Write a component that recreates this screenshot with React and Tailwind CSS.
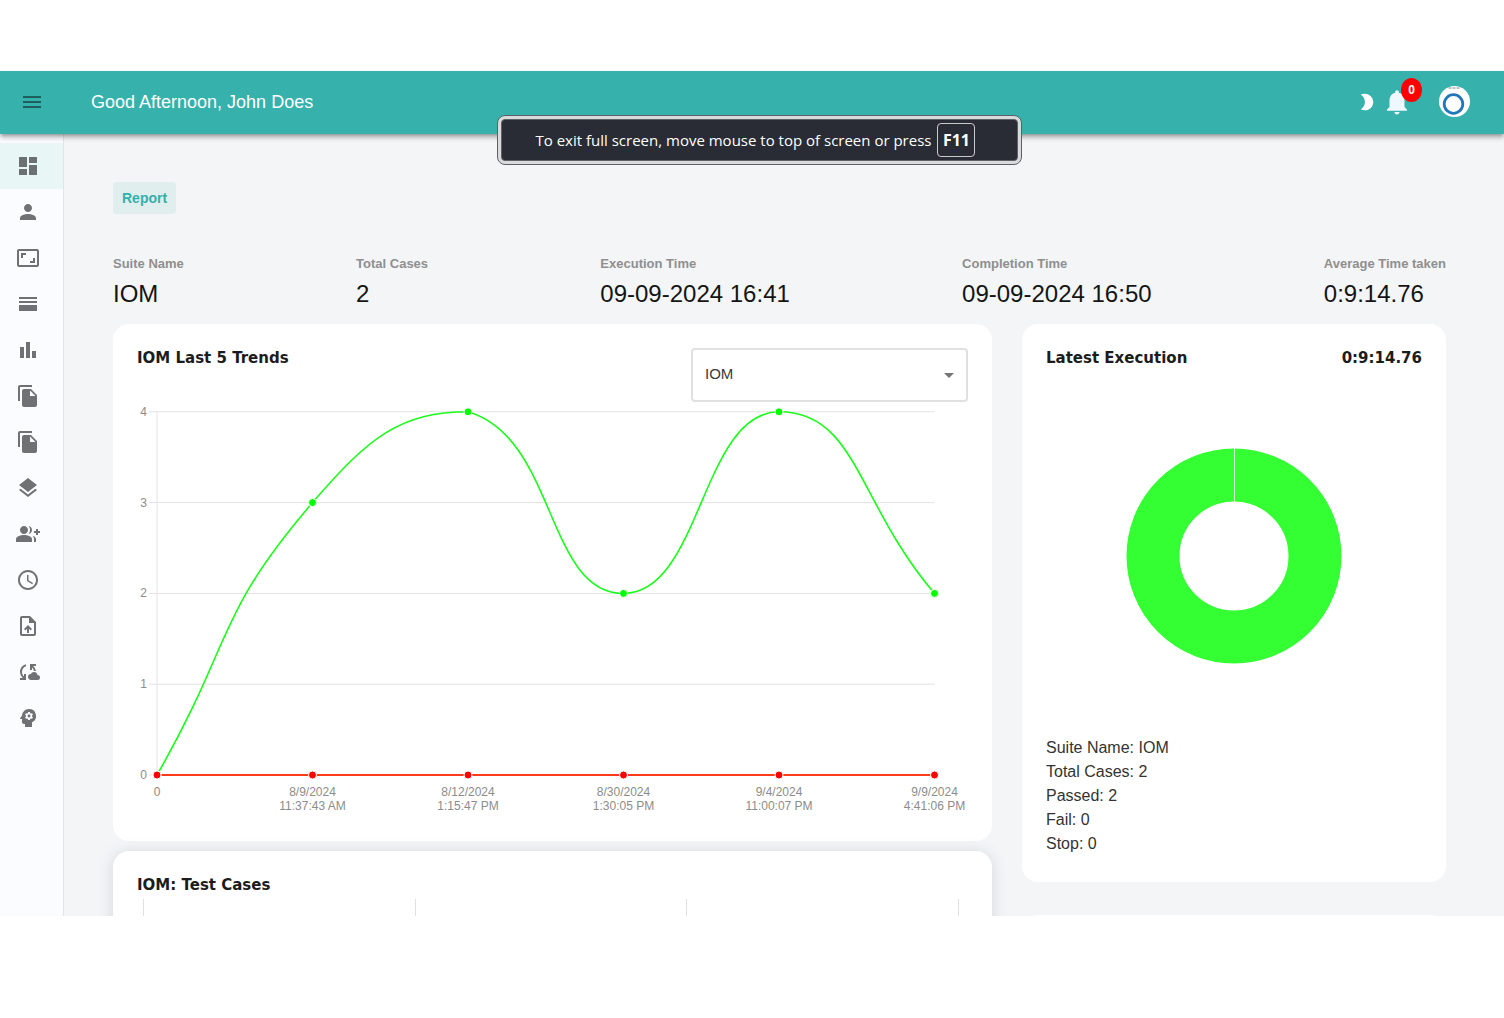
import React from "react";
import {
  MdMenu,
  MdDashboard,
  MdPerson,
  MdAspectRatio,
  MdHorizontalSplit,
  MdBarChart,
  MdFileCopy,
  MdLayers,
  MdGroupAdd,
  MdSchedule,
  MdUploadFile,
  MdCloudSync,
  MdPsychology,
  MdModeNight,
  MdNotifications,
  MdArrowDropDown,
} from "react-icons/md";

const NAV = [
  ["Dashboard", MdDashboard],
  ["Users", MdPerson],
  ["Screens", MdAspectRatio],
  ["Sections", MdHorizontalSplit],
  ["Reports", MdBarChart],
  ["Test cases", MdFileCopy],
  ["Test suites", MdFileCopy],
  ["Layers", MdLayers],
  ["Add group", MdGroupAdd],
  ["Schedule", MdSchedule],
  ["Upload", MdUploadFile],
  ["Cloud sync", MdCloudSync],
  ["Insights", MdPsychology],
];

const STATS = [
  ["Suite Name", "IOM"],
  ["Total Cases", "2"],
  ["Execution Time", "09-09-2024 16:41"],
  ["Completion Time", "09-09-2024 16:50"],
  ["Average Time taken", "0:9:14.76"],
];

const RUNS = [
  { date: "0", time: "", passed: 0 },
  { date: "8/9/2024", time: "11:37:43 AM", passed: 3 },
  { date: "8/12/2024", time: "1:15:47 PM", passed: 4 },
  { date: "8/30/2024", time: "1:30:05 PM", passed: 2 },
  { date: "9/4/2024", time: "11:00:07 PM", passed: 4 },
  { date: "9/9/2024", time: "4:41:06 PM", passed: 2 },
];

const LEFT = 20;
const STEP = 155.5;
const BASE = 373;
const UNIT = 90.8;
const px = (i) => LEFT + i * STEP;
const py = (v) => BASE - v * UNIT;

// Bezier spline with a fixed tension, its handles kept inside the plot area.
function splinePath(values, tension = 0.5) {
  const pts = values.map((v, i) => [px(i), py(v)]);
  const clamp = (y) => Math.min(BASE, Math.max(py(4), y));
  const handles = pts.map((p, i) => {
    const prev = pts[i - 1] || p;
    const next = pts[i + 1] || p;
    const before = Math.hypot(p[0] - prev[0], p[1] - prev[1]);
    const after = Math.hypot(next[0] - p[0], next[1] - p[1]);
    const a = (tension * before) / (before + after);
    const b = (tension * after) / (before + after);
    const dx = next[0] - prev[0];
    const dy = next[1] - prev[1];
    return {
      enter: [p[0] - a * dx, clamp(p[1] - a * dy)],
      leave: [p[0] + b * dx, clamp(p[1] + b * dy)],
    };
  });
  return pts
    .map((p, i) =>
      i === 0
        ? `M${p}`
        : `C${handles[i - 1].leave} ${handles[i].enter} ${p}`
    )
    .join("");
}

function TrendChart() {
  return (
    <svg
      viewBox="0 0 831 415"
      className="block w-full text-[12px]"
      role="img"
      aria-label="Passed and failed cases of the last 5 runs"
    >
      {[0, 1, 2, 3, 4].map((v) => (
        <g key={v}>
          <line x1="12" x2={px(5)} y1={py(v)} y2={py(v)} stroke="#e3e3e3" />
          <text x="10" y={py(v) + 4} textAnchor="end" fill="#8c8c8c">
            {v}
          </text>
        </g>
      ))}
      <line x1={LEFT} x2={LEFT} y1={py(4)} y2={BASE} stroke="#e3e3e3" />
      <path
        d={splinePath(RUNS.map((r) => r.passed))}
        fill="none"
        stroke="#1aff1a"
        strokeWidth="1.6"
      />
      <line x1={LEFT} x2={px(5)} y1={BASE} y2={BASE} stroke="#ff3a1c" strokeWidth="2" />
      {RUNS.map((r, i) => (
        <g key={r.date}>
          <circle cx={px(i)} cy={py(r.passed)} r="4" fill="#00ff00" stroke="#fff" />
          <circle cx={px(i)} cy={BASE} r="4" fill="#ff0000" stroke="#fff" />
          <text x={px(i)} y="394" textAnchor="middle" fill="#8c8c8c">
            {r.date}
          </text>
          <text x={px(i)} y="408" textAnchor="middle" fill="#8c8c8c">
            {r.time}
          </text>
        </g>
      ))}
    </svg>
  );
}

function Heading({ children }) {
  return (
    <h2 className="font-['DejaVu_Sans',sans-serif] text-[15px] leading-[20px] font-bold text-[#1c1c1c]">
      {children}
    </h2>
  );
}

function Header() {
  return (
    <header className="relative z-10 flex h-[63px] shrink-0 items-center bg-[#36b1ac] pr-[34px] pb-0.5 pl-5 shadow-[0_2px_4px_-1px_rgba(0,0,0,0.3),0_4px_5px_rgba(0,0,0,0.2)]">
      <button aria-label="Toggle menu" className="text-[#1d5f5c]">
        <MdMenu size={24} />
      </button>
      <h1 className="ml-[47px] text-[18px] leading-6 text-white">
        Good Afternoon, John Does
      </h1>
      <div className="ml-auto flex items-center">
        <button aria-label="Dark mode" className="text-white">
          <MdModeNight size={20} />
        </button>
        <button
          aria-label="Notifications"
          className="relative ml-[5px] text-[#f0f8ff]"
        >
          <MdNotifications size={30} />
          <span className="absolute -top-[9px] left-[19px] flex h-6 w-[21px] items-center justify-center rounded-[50%] bg-[#ff0000] text-[12px] font-bold text-white">
            0
          </span>
        </button>
        <button
          aria-label="Account"
          className="ml-[27px] size-[31px] rounded-full bg-white"
        >
          <svg viewBox="0 0 31 31">
            <path d="M9.500 2h12" stroke="#7f8688" strokeWidth="1" strokeDasharray="3 1" />
            <circle cx="14.500" cy="18" r="9.300" fill="none" stroke="#2277b8" strokeWidth="2.800" />
          </svg>
        </button>
      </div>
    </header>
  );
}

function Sidebar() {
  return (
    <nav className="w-16 shrink-0 border-r border-[#e3e5e8] bg-[#fbfcff] pt-[9px]">
      {NAV.map(([label, Icon], i) => (
        <a
          key={label}
          href="#"
          aria-label={label}
          className={
            i === 0
              ? "flex h-[46px] items-center bg-[#e9f6f6] pl-4 text-[#6b7172]"
              : "flex h-[46px] items-center pl-4 text-[#707173]"
          }
        >
          <Icon size={24} />
        </a>
      ))}
    </nav>
  );
}

function FullScreenHint() {
  return (
    <div className="pointer-events-none absolute inset-x-0 top-[115px] z-20 flex justify-center pl-[15px]">
      <div className="rounded-lg border border-[#5d6166] bg-[#d9dadb] p-[3px]">
        <div className="flex h-[42px] items-center gap-[6px] rounded-[4px] border border-[#5d6166] bg-[#292c34] pr-[42px] pl-[34px] font-['Open_Sans',sans-serif] text-[15px] text-white">
          <span>To exit full screen, move mouse to top of screen or press</span>
          <kbd className="flex h-[34px] w-[38px] items-center justify-center rounded-[4px] border border-[#c9cacc] font-['Open_Sans',sans-serif] text-[16px] font-bold">
            F11
          </kbd>
        </div>
      </div>
    </div>
  );
}

export default function App() {
  return (
    <div className="relative flex h-screen flex-col bg-white pt-[71px] pb-[102px] font-['Liberation_Sans',Arial,sans-serif]">
      <Header />
      <div className="flex min-h-0 flex-1 overflow-hidden bg-[#f3f5f7]">
        <Sidebar />
        <main className="min-w-0 flex-1 pt-12 pr-[58px] pl-[49px]">
          <button className="block h-8 rounded-[4px] bg-[#e0eeee] px-[9px] text-[14px] font-bold text-[#35b0ab]">
            Report
          </button>
          <dl className="mt-[42px] flex justify-between">
            {STATS.map(([label, value]) => (
              <div key={label}>
                <dt className="text-[13px] leading-4 font-bold text-[#8f8f8f]">
                  {label}
                </dt>
                <dd className="mt-1 text-[24px] leading-9 text-[#151515]">
                  {value}
                </dd>
              </div>
            ))}
          </dl>
          <div className="mt-3 grid grid-cols-[879fr_424fr] gap-[30px]">
            <div className="flex min-w-0 flex-col gap-[10px]">
              <section className="rounded-2xl bg-white p-6">
                <div className="flex items-start justify-between">
                  <Heading>IOM Last 5 Trends</Heading>
                  <div className="relative w-1/3">
                    <select
                      aria-label="Suite"
                      className="h-[54px] w-full appearance-none rounded-[4px] border-2 border-[#e0e0e0] bg-white px-3 pb-0.5 text-[15px] text-[#3a3a3a]"
                    >
                      <option>IOM</option>
                    </select>
                    <MdArrowDropDown
                      size={24}
                      className="pointer-events-none absolute top-[15px] right-[7px] text-[#757575]"
                    />
                  </div>
                </div>
                <TrendChart />
              </section>
              <section className="rounded-2xl bg-white p-6 shadow-[0_2px_16px_rgba(90,100,120,0.2)]">
                <Heading>IOM: Test Cases</Heading>
                <table className="mx-[6px] mt-1 w-[calc(100%-15px)] table-fixed border-collapse">
                  <tbody>
                    <tr>
                      {[0, 1, 2].map((c) => (
                        <td key={c} className="h-40 border-x border-[#e0e0e0]" />
                      ))}
                    </tr>
                  </tbody>
                </table>
              </section>
            </div>
            <div className="flex min-w-0 flex-col gap-[33px]">
              <section className="rounded-2xl bg-white px-6 pt-6 pb-[26px]">
                <div className="flex justify-between">
                  <Heading>Latest Execution</Heading>
                  <Heading>0:9:14.76</Heading>
                </div>
                <svg
                  viewBox="0 0 216 216"
                  className="mx-auto mt-20 mb-[72px] block size-[216px]"
                  role="img"
                  aria-label="All cases passed"
                >
                  <circle cx="108" cy="108" r="81" fill="none" stroke="#33ff33" strokeWidth="53" />
                  <path d="M108.500 0V54" stroke="#fff" strokeWidth="1" opacity="0.8" />
                </svg>
                <ul className="text-[16px] leading-6 text-[#333]">
                  <li>Suite Name: IOM</li>
                  <li>Total Cases: 2</li>
                  <li>Passed: 2</li>
                  <li>Fail: 0</li>
                  <li>Stop: 0</li>
                </ul>
              </section>
              <section className="h-40 rounded-2xl bg-white" />
            </div>
          </div>
        </main>
      </div>
      <FullScreenHint />
    </div>
  );
}
